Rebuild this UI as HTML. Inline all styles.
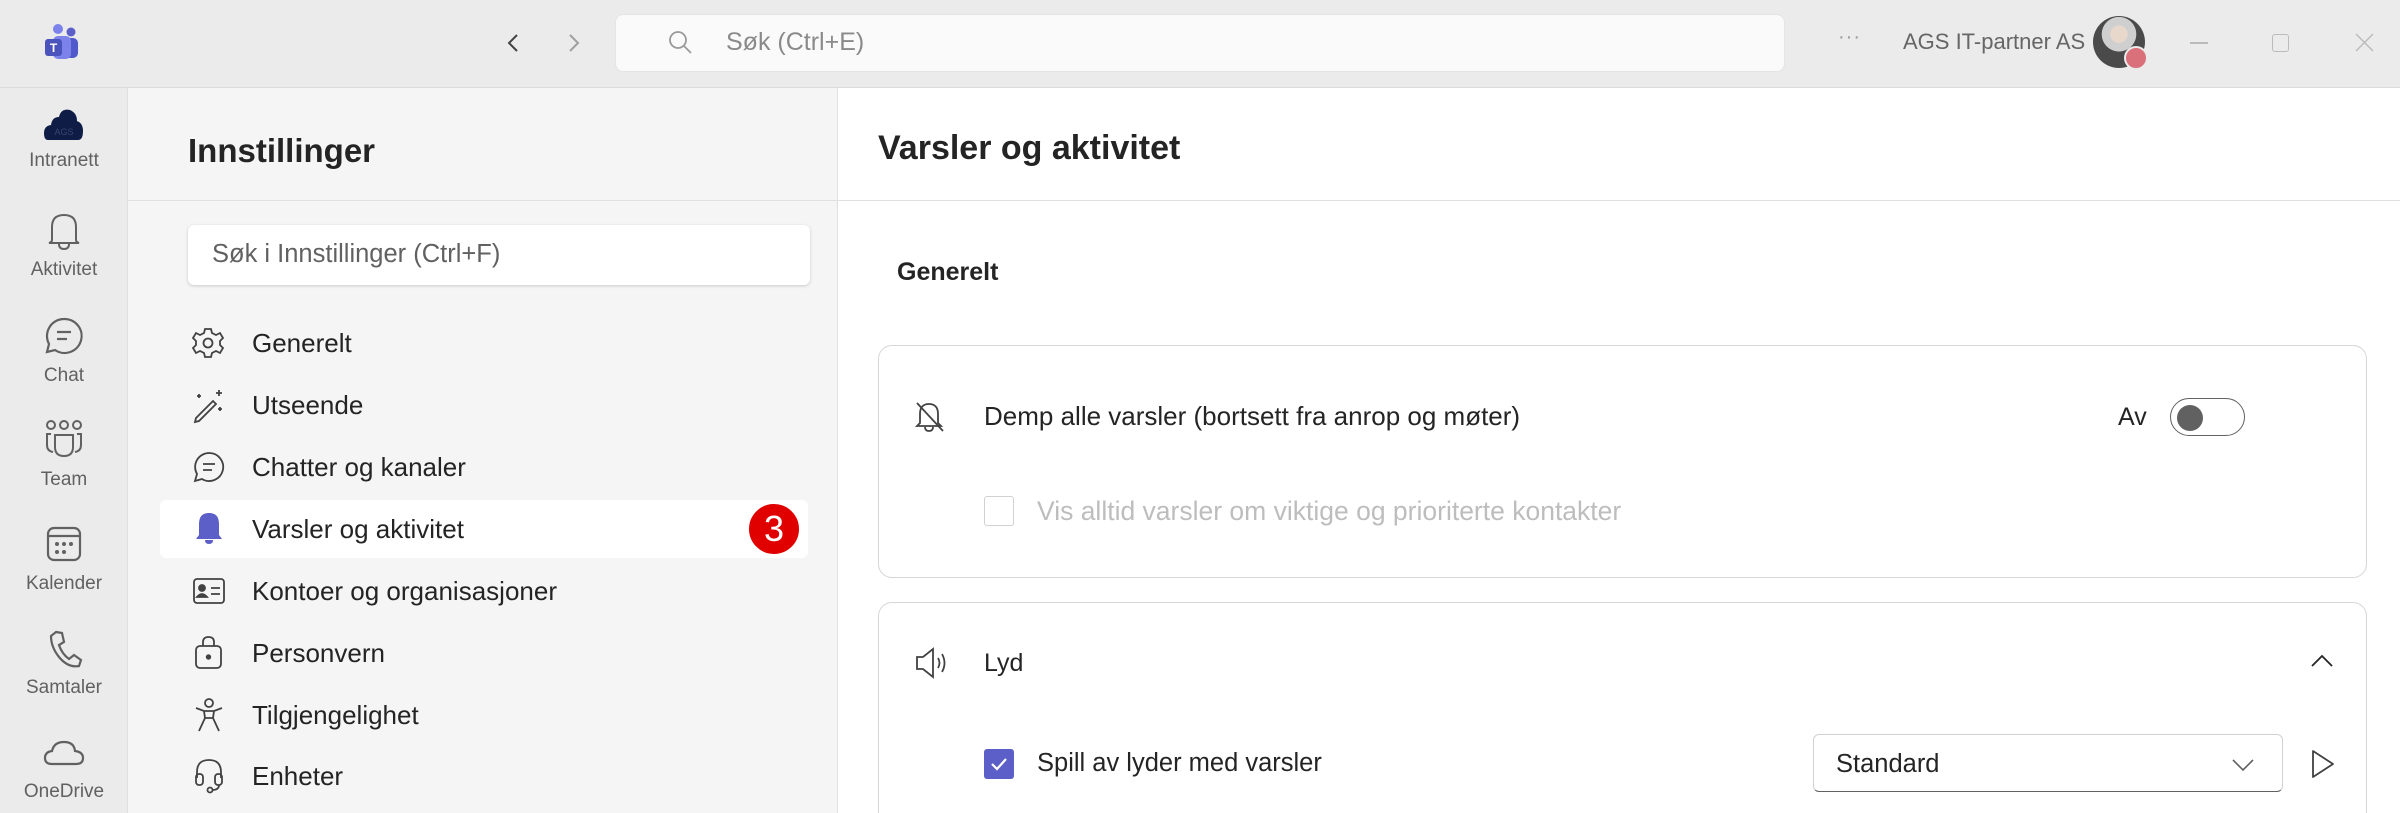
<!DOCTYPE html>
<html><head><meta charset="utf-8"><style>
*{margin:0;padding:0;box-sizing:border-box}
html,body{width:2400px;height:813px;overflow:hidden}
body{background:#fff;font-family:"Liberation Sans",sans-serif;color:#242424}
#w{position:relative;width:2400px;height:813px;overflow:hidden}
.a{position:absolute}
.t{white-space:nowrap}
svg{position:absolute;overflow:visible}
</style></head><body><div id="w">
<!-- title bar -->
<div class="a" style="left:0;top:0;width:2400px;height:88px;background:#ebebeb;border-bottom:1px solid #dcdcdc"></div>
<svg style="left:44px;top:24px" width="36" height="36" viewBox="0 0 36 36">
<circle cx="14" cy="5" r="5" fill="#7b83eb"/><circle cx="27" cy="8" r="4.5" fill="#5b5fc7"/>
<rect x="20" y="14" width="14" height="20" rx="5" fill="#5059c9"/>
<rect x="9" y="12" width="18" height="23" rx="5" fill="#7b83eb"/>
<rect x="1" y="15" width="17" height="17" rx="3" fill="#4b53bc"/>
<text x="9.5" y="28" font-size="12" font-weight="bold" fill="#fff" text-anchor="middle" font-family="Liberation Sans">T</text></svg>
<svg style="left:506px;top:33px" width="14" height="20"><path d="M11 2 L3 10 L11 18" stroke="#424242" stroke-width="2" fill="none"/></svg>
<svg style="left:567px;top:33px" width="14" height="20"><path d="M3 2 L11 10 L3 18" stroke="#a0a0a0" stroke-width="2" fill="none"/></svg>
<div class="a" style="left:615px;top:14px;width:1170px;height:58px;background:#fafafa;border-radius:8px;border:1px solid #e4e4e4"></div>
<svg style="left:668px;top:30px" width="26" height="26"><circle cx="10" cy="10" r="8" stroke="#9a9a9a" stroke-width="1.8" fill="none"/><path d="M16 16 L23 23" stroke="#9a9a9a" stroke-width="1.8"/></svg>
<div class="a t" style="left:726px;top:28px;font-size:25px;color:#8a8a8a">Søk (Ctrl+E)</div>
<div class="a t" style="left:1838px;top:26px;font-size:20px;color:#9a9a9a;letter-spacing:1px">···</div>
<div class="a t" style="left:1903px;top:29px;font-size:22px;color:#666">AGS IT-partner AS</div>
<div class="a" style="left:2093px;top:16px;width:52px;height:52px;border-radius:50%;background:radial-gradient(circle at 50% 35%,#e8d8cc 0 20%,#cfcfcf 21% 40%,#4a4a4a 41% 100%)"></div>
<div class="a" style="left:2124px;top:46px;width:24px;height:24px;border-radius:50%;background:#d9707a;border:2px solid #ebebeb"></div>
<div class="a" style="left:2190px;top:42px;width:18px;height:1.5px;background:#bbb"></div>
<div class="a" style="left:2272px;top:34px;width:17px;height:18px;border:1.5px solid #bbb;border-radius:3px"></div>
<svg style="left:2355px;top:33px" width="19" height="19"><path d="M1 1 L18 18 M18 1 L1 18" stroke="#bbb" stroke-width="1.5"/></svg>

<!-- left rail -->
<div class="a" style="left:0;top:88px;width:128px;height:725px;background:#ebebeb;border-right:1px solid #e0e0e0"></div>
<svg style="left:44px;top:106px" width="40" height="36"><path d="M4 34 Q0 34 0 27 Q0 20 7 19 Q8 11 15 11 Q17 2 26 4 Q33 7 33 15 Q39 17 39 25 Q39 34 34 34 Z" fill="#0f1c46"/><text x="20" y="29" font-size="9" fill="#3a4670" text-anchor="middle" font-family="Liberation Sans">AGS</text></svg>
<div class="a t" style="left:0;width:128px;text-align:center;top:150px;font-size:19px;color:#616161">Intranett</div>
<svg style="left:46px;top:212px" width="36" height="38" viewBox="0 0 36 38" fill="none" stroke="#616161" stroke-width="2"><path d="M6 28 L6 15 Q6 3 18 3 Q30 3 30 15 L30 28 Q30 30 33 31 L3 31 Q6 30 6 28 Z"/><path d="M13 32 Q13 37 18 37 Q23 37 23 32"/></svg>
<div class="a t" style="left:0;width:128px;text-align:center;top:259px;font-size:19px;color:#616161">Aktivitet</div>
<svg style="left:45px;top:317px" width="38" height="38" fill="none" stroke="#616161" stroke-width="2.2"><path d="M19 2 A17 17 0 1 1 10 33 L2 35 L4 27 A17 17 0 0 1 19 2 Z"/><path d="M12 15 H26 M12 22 H22"/></svg>
<div class="a t" style="left:0;width:128px;text-align:center;top:365px;font-size:19px;color:#616161">Chat</div>
<svg style="left:44px;top:420px" width="40" height="40" fill="none" stroke="#616161" stroke-width="2"><circle cx="7" cy="5" r="4"/><circle cx="20" cy="5" r="4"/><circle cx="33" cy="5" r="4"/><path d="M11 15 H29 V27 Q29 36 20 36 Q11 36 11 27 Z"/><path d="M7 14 H3 V25 Q3 31 9 32 M33 14 H37 V25 Q37 31 31 32"/></svg>
<div class="a t" style="left:0;width:128px;text-align:center;top:469px;font-size:19px;color:#616161">Team</div>
<svg style="left:46px;top:526px" width="36" height="36" fill="none" stroke="#616161" stroke-width="2.2"><rect x="2" y="2" width="32" height="32" rx="6"/><path d="M2 10 H34"/><g fill="#616161" stroke="none"><circle cx="11" cy="18" r="2"/><circle cx="18" cy="18" r="2"/><circle cx="25" cy="18" r="2"/><circle cx="11" cy="26" r="2"/><circle cx="18" cy="26" r="2"/></g></svg>
<div class="a t" style="left:0;width:128px;text-align:center;top:573px;font-size:19px;color:#616161">Kalender</div>
<svg style="left:48px;top:630px" width="34" height="38" fill="none" stroke="#616161" stroke-width="2.2"><path d="M8 2 L14 3 L16 12 L11 15 Q14 24 21 29 L26 25 L33 30 L31 36 Q20 38 11 27 Q3 17 3 6 Z"/></svg>
<div class="a t" style="left:0;width:128px;text-align:center;top:677px;font-size:19px;color:#616161">Samtaler</div>
<svg style="left:44px;top:740px" width="40" height="26" fill="none" stroke="#616161" stroke-width="2.2"><path d="M8 24 Q1 24 1 18 Q1 12 8 11 Q10 2 20 2 Q30 2 31 11 Q39 12 39 18 Q39 24 32 24 Z"/></svg>
<div class="a t" style="left:0;width:128px;text-align:center;top:781px;font-size:19px;color:#616161">OneDrive</div>

<!-- settings panel -->
<div class="a" style="left:128px;top:88px;width:710px;height:725px;background:#f5f5f5;border-right:1px solid #e0e0e0"></div>
<div class="a" style="left:128px;top:200px;width:710px;height:1px;background:#e0e0e0"></div>
<div class="a t" style="left:188px;top:132px;font-size:33px;font-weight:bold;color:#242424">Innstillinger</div>
<div class="a" style="left:188px;top:225px;width:622px;height:60px;background:#fff;border-radius:6px;box-shadow:0 1px 3px rgba(0,0,0,.18)"></div>
<div class="a t" style="left:212px;top:240px;font-size:25.5px;color:#616161">Søk i Innstillinger (Ctrl+F)</div>
<div class="a" style="left:160px;top:500px;width:648px;height:58px;background:#fff;border-radius:6px"></div>
<div class="a" style="left:747px;top:502px;width:54px;height:54px;border-radius:50%;background:#e00000;border:2px solid #fff;color:#fff;font-size:36px;text-align:center;line-height:50px">3</div>

<svg style="left:193px;top:328px" width="30" height="30" fill="none" stroke="#424242" stroke-width="1.8"><path d="M12 1 H18 L19 5 L23 7 L27 5 L30 10 L27 13 V17 L30 20 L27 25 L23 23 L19 25 L18 29 H12 L11 25 L7 23 L3 25 L0 20 L3 17 V13 L0 10 L3 5 L7 7 L11 5 Z"/><circle cx="15" cy="15" r="4.5"/></svg>
<div class="a t" style="left:252px;top:328px;font-size:26px;color:#242424">Generelt</div>
<svg style="left:193px;top:388px" width="30" height="34" fill="none" stroke="#424242" stroke-width="1.8"><path d="M3 30 L20 13 L23 16 L6 33 L2 34 Z"/><path d="M26 2 V8 M23 5 H29 M6 6 V10 M4 8 H8 M27 19 V23 M25 21 H29"/></svg>
<div class="a t" style="left:252px;top:390px;font-size:26px;color:#242424">Utseende</div>
<svg style="left:193px;top:451px" width="32" height="32" fill="none" stroke="#424242" stroke-width="1.8"><path d="M16 2 A14 14 0 1 1 9 28 L2 30 L4 23 A14 14 0 0 1 16 2 Z"/><path d="M10 13 H22 M10 19 H19"/></svg>
<div class="a t" style="left:252px;top:452px;font-size:26px;color:#242424">Chatter og kanaler</div>
<svg style="left:194px;top:511px" width="30" height="34" fill="#5b5fc7"><path d="M5 24 V13 Q5 2 15 2 Q25 2 25 13 V24 L28 28 H2 Z"/><path d="M11 29 Q11 33 15 33 Q19 33 19 29 Z"/></svg>
<div class="a t" style="left:252px;top:514px;font-size:26px;color:#242424">Varsler og aktivitet</div>
<svg style="left:193px;top:578px" width="32" height="26" fill="none" stroke="#424242" stroke-width="1.8"><rect x="1" y="1" width="30" height="24" rx="3"/><circle cx="9" cy="10" r="3" fill="#424242"/><path d="M4 19 Q9 13 14 19 Z" fill="#424242"/><path d="M18 10 H27 M18 16 H27"/></svg>
<div class="a t" style="left:252px;top:576px;font-size:26px;color:#242424">Kontoer og organisasjoner</div>
<svg style="left:195px;top:636px" width="28" height="34" fill="none" stroke="#424242" stroke-width="1.8"><rect x="1" y="10" width="25" height="22" rx="4"/><path d="M8 10 V6 Q8 1 13.5 1 Q19 1 19 6 V10"/><circle cx="13.5" cy="21" r="1.8" fill="#424242"/></svg>
<div class="a t" style="left:252px;top:638px;font-size:26px;color:#242424">Personvern</div>
<svg style="left:194px;top:698px" width="30" height="34" fill="none" stroke="#424242" stroke-width="1.8"><circle cx="15" cy="5" r="4"/><path d="M2 10 L10 13 H20 L28 10 M10 13 L11 20 L5 33 M20 13 L19 20 L25 33 M11 20 H19"/></svg>
<div class="a t" style="left:252px;top:700px;font-size:26px;color:#242424">Tilgjengelighet</div>
<svg style="left:194px;top:758px" width="30" height="36" fill="none" stroke="#424242" stroke-width="1.8"><path d="M3 20 V14 Q3 2 15 2 Q27 2 27 14 V20"/><rect x="2" y="16" width="7" height="11" rx="3"/><rect x="21" y="16" width="7" height="11" rx="3"/><path d="M25 27 Q25 32 18 32"/><circle cx="16" cy="32" r="2.5"/></svg>
<div class="a t" style="left:252px;top:761px;font-size:26px;color:#242424">Enheter</div>

<!-- right panel -->
<div class="a" style="left:838px;top:200px;width:1562px;height:1px;background:#e0e0e0"></div>
<div class="a t" style="left:878px;top:129px;font-size:34px;font-weight:bold;color:#242424">Varsler og aktivitet</div>
<div class="a t" style="left:897px;top:258px;font-size:25px;font-weight:bold;color:#242424">Generelt</div>
<div class="a" style="left:878px;top:345px;width:1489px;height:233px;border:1px solid #d6d6d6;border-radius:14px;background:#fff"></div>
<svg style="left:915px;top:401px" width="30" height="32" fill="none" stroke="#424242" stroke-width="1.8"><path d="M5 22 V13 Q5 3 14 3 Q23 3 23 13 V22 L26 25 H2 Z"/><path d="M10 26 Q10 30 14 30 Q18 30 18 26"/><path d="M2 2 L28 30"/></svg>
<div class="a t" style="left:984px;top:401px;font-size:26px;color:#242424">Demp alle varsler (bortsett fra anrop og møter)</div>
<div class="a t" style="left:2118px;top:403px;font-size:25px;color:#242424">Av</div>
<div class="a" style="left:2170px;top:398px;width:75px;height:38px;border:1.5px solid #616161;border-radius:19px"></div>
<div class="a" style="left:2177px;top:405px;width:26px;height:26px;border-radius:50%;background:#616161"></div>
<div class="a" style="left:984px;top:496px;width:30px;height:30px;border:1.5px solid #d1d1d1;border-radius:3px"></div>
<div class="a t" style="left:1037px;top:496px;font-size:26.5px;color:#bdbdbd">Vis alltid varsler om viktige og prioriterte kontakter</div>

<div class="a" style="left:878px;top:602px;width:1489px;height:211px;border:1px solid #d6d6d6;border-bottom:none;border-radius:14px 14px 0 0;background:#fff"></div>
<svg style="left:915px;top:647px" width="34" height="32" fill="none" stroke="#424242" stroke-width="1.8"><path d="M2 10 H8 L18 2 V30 L8 22 H2 Z"/><path d="M23 11 Q26 16 23 21 M27 7 Q32 16 27 25"/></svg>
<div class="a t" style="left:984px;top:649px;font-size:25px;color:#242424">Lyd</div>
<svg style="left:2310px;top:654px" width="24" height="14"><path d="M2 12 L12 2 L22 12" stroke="#242424" stroke-width="1.8" fill="none"/></svg>
<div class="a" style="left:984px;top:749px;width:30px;height:30px;background:#5b5fc7;border-radius:3px"></div>
<svg style="left:990px;top:756px" width="18" height="16"><path d="M2 8 L7 13 L16 3" stroke="#fff" stroke-width="2.2" fill="none"/></svg>
<div class="a t" style="left:1037px;top:749px;font-size:25.5px;color:#242424">Spill av lyder med varsler</div>
<div class="a" style="left:1813px;top:734px;width:470px;height:58px;border:1px solid #d1d1d1;border-bottom:1.5px solid #616161;border-radius:6px;background:#fff"></div>
<div class="a t" style="left:1836px;top:750px;font-size:25.5px;color:#242424">Standard</div>
<svg style="left:2231px;top:758px" width="24" height="14"><path d="M2 2 L12 12 L22 2" stroke="#616161" stroke-width="1.6" fill="none"/></svg>
<svg style="left:2310px;top:748px" width="26" height="32"><path d="M3 3 L23 16 L3 29 Z" stroke="#424242" stroke-width="1.8" fill="none" stroke-linejoin="round"/></svg>
</div></body></html>
